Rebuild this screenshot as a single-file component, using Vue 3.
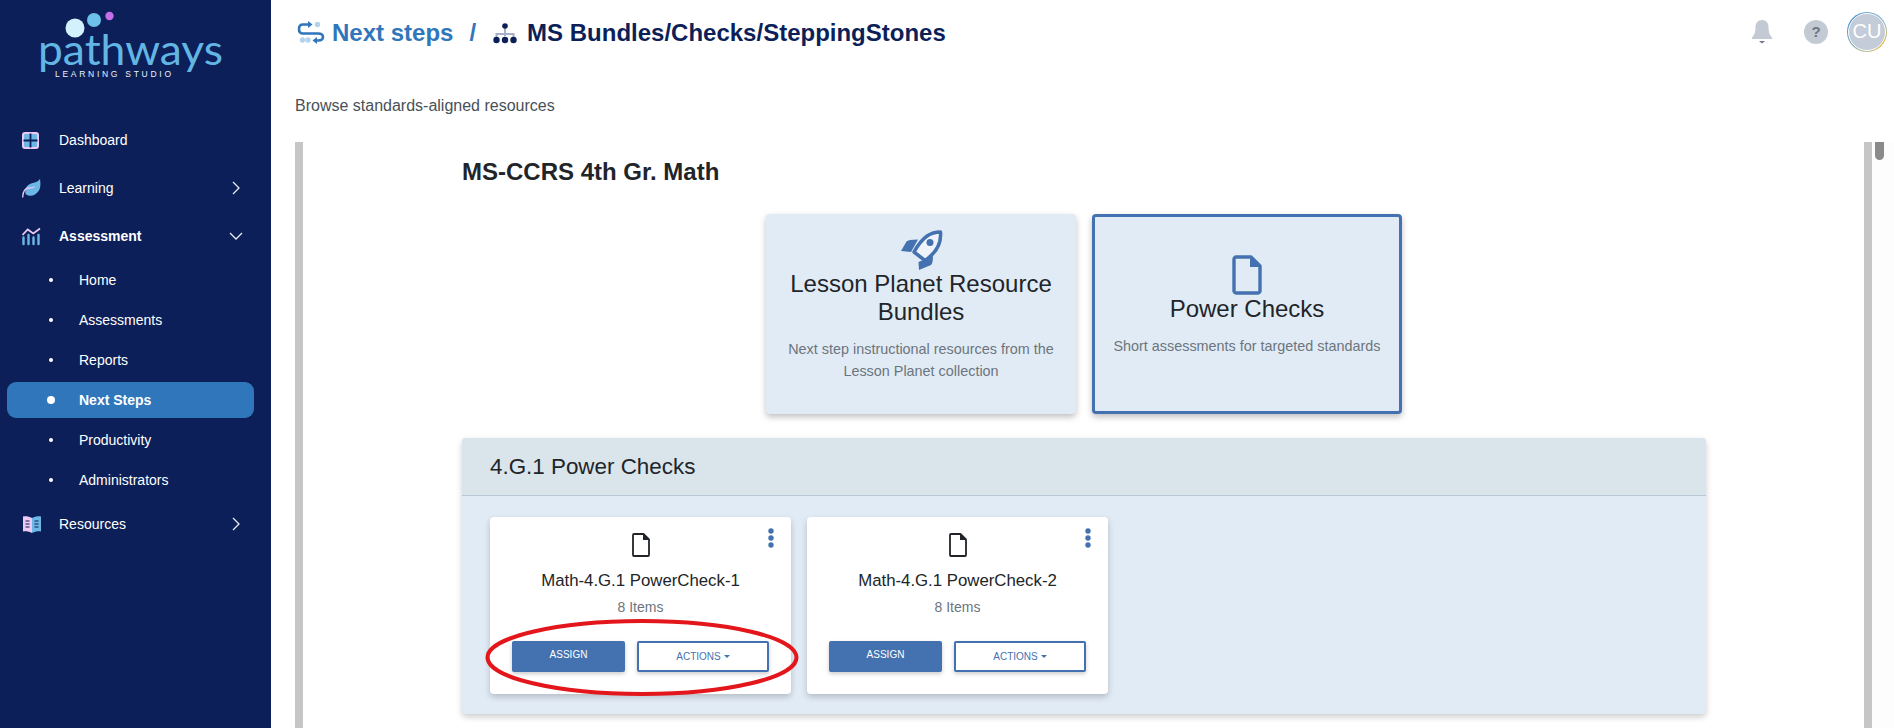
<script setup>
const subItems = [
  { label: 'Home' },
  { label: 'Assessments' },
  { label: 'Reports' },
  { label: 'Next Steps', active: true },
  { label: 'Productivity' },
  { label: 'Administrators' },
]

const checks = [
  { title: 'Math-4.G.1 PowerCheck-1', count: '8 Items' },
  { title: 'Math-4.G.1 PowerCheck-2', count: '8 Items' },
]
</script>

<template>
  <div class="app">
    <aside class="sidebar">
      <svg class="logo" width="271" height="96" viewBox="0 0 271 96">
        <circle cx="75" cy="28" r="9.500" fill="#d3f0fd" />
        <circle cx="94" cy="20" r="7" fill="#6cc0e9" />
        <circle cx="109.500" cy="16" r="4.200" fill="#c46ee9" />
        <text x="38" y="65" class="logo-word" textLength="185" lengthAdjust="spacingAndGlyphs">pathways</text>
        <text x="55" y="76.500" class="logo-sub" textLength="116">LEARNING STUDIO</text>
      </svg>

      <nav class="nav">
        <a class="nav-item">
          <svg class="nav-icon" viewBox="0 0 20 20">
            <rect x="1" y="3" width="15" height="15" rx="2" fill="#6cb7e6" stroke="#ecc9f3" stroke-width="2" />
            <path d="M8.500 3.500V17.500M1.500 10.500H15.500" stroke="#0d1f58" stroke-width="1.800" />
          </svg>
          <span>Dashboard</span>
        </a>
        <a class="nav-item">
          <svg class="nav-icon" viewBox="0 0 20 20">
            <path d="M18 1C19 8 18.500 13 13 16.500C9.500 18.500 6 18 3.500 16C2.500 10.500 5 7 9 5.500C13 4.500 16 4 18 1Z" fill="#6cb7e6" />
            <path d="M0.700 19C1 14 3 10 7 10C9 10 10.500 10 12 9" fill="none" stroke="#ecc9f3" stroke-width="1.300" stroke-linecap="round" />
          </svg>
          <span>Learning</span>
          <svg class="chev" viewBox="0 0 10 14"><path d="M2 1L8 7L2 13" /></svg>
        </a>
        <a class="nav-item strong">
          <svg class="nav-icon" viewBox="0 0 20 20">
            <path d="M0.500 9L5.700 3.500L11.300 7.500L18 2.500" fill="none" stroke="#ecc9f3" stroke-width="1.800" />
            <path d="M1.500 11.500V18M6.500 9V18M11.500 11.500V18M16.500 9V18" fill="none" stroke="#6cb7e6" stroke-width="2.400" stroke-linecap="round" />
          </svg>
          <span>Assessment</span>
          <svg class="chev down" viewBox="0 0 14 10"><path d="M1 2L7 8L13 2" /></svg>
        </a>
        <ul class="sub-list">
          <li v-for="item in subItems" :key="item.label" class="sub-item" :class="{ active: item.active }">
            <i class="bullet"></i>
            <span>{{ item.label }}</span>
          </li>
        </ul>
        <a class="nav-item">
          <svg class="nav-icon" viewBox="0 0 20 20">
            <path d="M1 2.500C4 2 7 2.500 10 4V19C7 17.500 4 17 1 17.500Z" fill="#ecc9f3" />
            <path d="M19 2.500C16 2 13 2.500 10 4V19C13 17.500 16 17 19 17.500Z" fill="#6cb7e6" />
            <path d="M3.500 7H7.500M3.500 10H7.500M3.500 13H7.500M12.500 7H16.500M12.500 10H16.500M12.500 13H16.500" stroke="#0d1f58" stroke-width="1.200" />
          </svg>
          <span>Resources</span>
          <svg class="chev" viewBox="0 0 10 14"><path d="M2 1L8 7L2 13" /></svg>
        </a>
      </nav>
    </aside>

    <div class="main">
      <header class="topbar">
        <svg class="crumb-icon steps" width="28" height="24" viewBox="7 6 28 24">
          <path d="M19 9.500H13Q9 9.500 9 14Q9 18.500 13 18.500H28Q33 18.500 33 22Q33 25.500 28 25.500H26" fill="none" stroke="#3076ba" stroke-width="2.600" />
          <path d="M18 6L22.500 9.500L18 13Z" fill="#3076ba" />
          <path d="M27 22L22.500 25.500L27 29Z" fill="#3076ba" />
          <circle cx="27.500" cy="9.500" r="2.700" fill="#b4d2ea" />
          <circle cx="12.500" cy="25" r="2.700" fill="#b4d2ea" />
          <circle cx="18" cy="25" r="2.700" fill="#b4d2ea" />
        </svg>
        <span class="crumb-link">Next steps</span>
        <span class="crumb-sep">/</span>
        <svg class="crumb-icon tree" width="24" height="24" viewBox="0 0 24 24">
          <path d="M12 6V15M3.500 18V13H20.500V18" fill="none" stroke="#a9afc4" stroke-width="2" />
          <circle cx="12" cy="5" r="2.800" fill="#0d1f58" />
          <circle cx="3.500" cy="19" r="3.200" fill="#0d1f58" />
          <circle cx="12" cy="19" r="3.200" fill="#0d1f58" />
          <circle cx="20.500" cy="19" r="3.200" fill="#0d1f58" />
        </svg>
        <span class="crumb-current">MS Bundles/Checks/SteppingStones</span>

        <div class="top-actions">
          <svg width="22" height="26" viewBox="0 0 22 26">
            <path d="M11 1C7 1 4.500 4 4.500 8C4.500 13 3.500 16 1 18.500C0.500 19.500 1 20 2 20H20C21 20 21.500 19.500 21 18.500C18.500 16 17.500 13 17.500 8C17.500 4 15 1 11 1Z" fill="#c3cad3" />
            <path d="M8 22H14L11 24.500Z" fill="#6b7688" />
          </svg>
          <div class="help">?</div>
          <div class="avatar"><span>CU</span></div>
        </div>
      </header>

      <p class="intro">Browse standards-aligned resources</p>

      <div class="frame">
        <div class="panel">
          <h2 class="panel-title">MS-CCRS 4th Gr. Math</h2>

          <div class="choices">
            <div class="choice">
              <svg width="60" height="42" viewBox="0 5 60 42" class="choice-icon">
                <path d="M49.500 9C40 9 32 13 23 29L34 37.500C45 30 50.500 20.500 49.500 9Z" fill="#edf3f9" stroke="#4472b0" stroke-width="3.500" stroke-linejoin="round" />
                <circle cx="39" cy="19.500" r="3.500" fill="#4472b0" />
                <path d="M10 28L15.500 18.500Q17 16.500 27 16.500L20 29Z" fill="#4472b0" />
                <path d="M28 47L40 42Q42 40 42 33L27.500 39Z" fill="#4472b0" />
              </svg>
              <h3>Lesson Planet Resource Bundles</h3>
              <p>Next step instructional resources from the Lesson Planet collection</p>
            </div>
            <div class="choice selected">
              <svg width="30" height="40" viewBox="0 0 30 40" class="choice-icon">
                <path d="M4 2H19L28 11V36C28 37 27 38 26 38H4C3 38 2 37 2 36V4C2 3 3 2 4 2Z" fill="none" stroke="#4472b0" stroke-width="3.400" stroke-linejoin="round" />
                <path d="M18 2V12H28Z" fill="#4472b0" />
              </svg>
              <h3>Power Checks</h3>
              <p>Short assessments for targeted standards</p>
            </div>
          </div>

          <section class="group">
            <h3 class="group-head">4.G.1 Power Checks</h3>
            <div class="group-body">
              <article v-for="(check, i) in checks" :key="check.title" class="check">
                <svg class="kebab" width="6" height="20" viewBox="0 0 6 20">
                  <circle cx="3" cy="3" r="2.700" />
                  <circle cx="3" cy="10" r="2.700" />
                  <circle cx="3" cy="17" r="2.700" />
                </svg>
                <svg class="check-doc" width="18" height="24" viewBox="0 0 18 24">
                  <path d="M2 1H11.500L17 6.500V22C17 22.500 16.500 23 16 23H2C1.500 23 1 22.500 1 22V2C1 1.500 1.500 1 2 1Z" fill="none" stroke="#212529" stroke-width="1.800" stroke-linejoin="round" />
                  <path d="M11 1V7H17Z" fill="#212529" />
                </svg>
                <div class="check-title">{{ check.title }}</div>
                <div class="check-count">{{ check.count }}</div>
                <div class="check-actions">
                  <button type="button" class="btn-assign">ASSIGN</button>
                  <button type="button" class="btn-actions">ACTIONS<i class="caret"></i></button>
                </div>
                <svg v-if="i === 0" class="highlight" width="320" height="80" viewBox="0 0 320 80">
                  <ellipse cx="157" cy="38.500" rx="154.500" ry="36.500" fill="none" stroke="#e3161b" stroke-width="4" />
                </svg>
              </article>
            </div>
          </section>
        </div>
        <div class="scrolltrack"><div class="thumb"></div></div>
      </div>
    </div>
  </div>
</template>

<style>
html,
body {
  margin: 0;
  overflow: hidden;
  background: #fff;
}
</style>

<style scoped>
.app {
  display: flex;
  width: 1894px;
  height: 728px;
  overflow: hidden;
  font-family: "Liberation Sans", Arial, sans-serif;
  color: #212529;
}

.sidebar {
  flex: 0 0 271px;
  height: 728px;
  background: #0d1f58;
  color: #fff;
  box-sizing: border-box;
}

.logo {
  display: block;
}

.logo-word {
  font-family: "Lato", "Open Sans", sans-serif;
  font-weight: 400;
  font-size: 42px;
  fill: #62b6e4;
}

.logo-sub {
  font-family: "Liberation Sans", sans-serif;
  font-size: 8.500px;
  fill: #e6f3fb;
}

.nav {
  margin-top: 20px;
}

.nav-item {
  display: flex;
  align-items: center;
  height: 48px;
  padding-left: 22px;
  font-size: 14px;
  position: relative;
}

.nav-item.strong {
  font-weight: 700;
}

.nav-icon {
  width: 20px;
  height: 20px;
  margin-right: 17px;
}

.chev {
  position: absolute;
  left: 231px;
  width: 10px;
  height: 14px;
  fill: none;
  stroke: #e8edf5;
  stroke-width: 1.300;
}

.chev.down {
  left: 229px;
  width: 14px;
  height: 10px;
}

.sub-list {
  list-style: none;
  margin: 0 0 -2px;
  padding: 0;
}

.sub-item {
  display: flex;
  align-items: center;
  height: 36px;
  margin: 0 17px 4px 7px;
  padding-left: 44px;
  border-radius: 9px;
  font-size: 14px;
  position: relative;
}

.sub-item:first-child {
  margin-top: 2px;
}

.bullet {
  flex: none;
  width: 4px;
  height: 4px;
  margin-left: -2px;
  margin-right: 26px;
  border-radius: 50%;
  background: #fff;
}

.sub-item.active {
  background: #3076ba;
  font-weight: 700;
}

.sub-item.active .bullet {
  width: 8px;
  height: 8px;
  margin-left: -4px;
  margin-right: 24px;
}

.main {
  flex: 1;
  min-width: 0;
  display: flex;
  flex-direction: column;
}

.topbar {
  display: flex;
  align-items: center;
  height: 64px;
  padding: 2px 7px 0 26px;
  box-sizing: border-box;
  font-size: 24px;
  font-weight: 700;
}

.crumb-icon {
  flex: none;
  margin-right: 10px;
}

.crumb-icon.steps {
  margin-right: 7px;
}

.crumb-link {
  color: #3076ba;
}

.crumb-sep {
  color: #3076ba;
  margin: 0 17px 0 16px;
}

.crumb-current {
  color: #0d1f58;
}

.top-actions {
  margin-left: auto;
  margin-top: -2px;
  display: flex;
  align-items: center;
  gap: 22px;
}

.help {
  width: 24px;
  height: 24px;
  margin-left: 9px;
  border-radius: 50%;
  background: #c3cad3;
  color: #6b7688;
  font-size: 15px;
  line-height: 24px;
  text-align: center;
}

.avatar {
  width: 40px;
  height: 40px;
  margin-left: -3px;
  box-sizing: border-box;
  border-radius: 50%;
  padding: 1px;
  background: conic-gradient(from 300deg, #3f8fd0, #8fb8c8 120deg, #e3b63e 180deg, #c0c59a 240deg, #3f8fd0);
}

.avatar span {
  display: block;
  height: 100%;
  border-radius: 50%;
  border: 1.500px solid #fff;
  box-sizing: border-box;
  background: #c3ccd8;
  color: #fff;
  font-size: 20px;
  font-weight: 400;
  line-height: 35px;
  text-align: center;
}

.intro {
  margin: 33px 0 0;
  padding-left: 24px;
  height: 45px;
  font-size: 16px;
  line-height: 18px;
  color: #495057;
}

.frame {
  flex: 1;
  min-height: 0;
  display: flex;
  margin-left: 24px;
}

.panel {
  width: 1577px;
  box-sizing: border-box;
  border-left: 8px solid #c6c6c6;
  border-right: 8px solid #c6c6c6;
  padding: 16px 158px 0 159px;
  overflow: hidden;
}

.panel-title {
  margin: 0;
  font-size: 24px;
  line-height: 28px;
  font-weight: 700;
  color: #212529;
}

.choices {
  display: flex;
  justify-content: center;
  gap: 16px;
  margin-top: 28px;
}

.choice {
  width: 310px;
  height: 200px;
  box-sizing: border-box;
  padding: 14px 20px 0;
  display: flex;
  flex-direction: column;
  align-items: center;
  text-align: center;
  background: #e1ebf5;
  border-radius: 4px;
  box-shadow: 0 3px 6px rgba(0, 0, 0, 0.25);
}

.choice.selected {
  padding: 38px 10px 0;
  border: 3px solid #4472b0;
}

.choice-icon {
  flex: none;
}

.choice h3 {
  margin: 0;
  font-size: 24px;
  line-height: 28px;
  font-weight: 400;
}

.choice p {
  margin: 12px 0 0;
  font-size: 14.400px;
  line-height: 22px;
  color: #6c757d;
}

.group {
  margin-top: 24px;
  background: #e1ebf5;
  border-radius: 4px;
  box-shadow: 0 3px 6px rgba(0, 0, 0, 0.2);
}

.group-head {
  margin: 0;
  height: 58px;
  box-sizing: border-box;
  padding-left: 28px;
  background: #dae4eb;
  border-bottom: 1px solid #b9c8d6;
  border-radius: 4px 4px 0 0;
  font-size: 22.400px;
  font-weight: 400;
  line-height: 57px;
}

.group-body {
  display: flex;
  gap: 16px;
  padding: 21px 28px 20px;
}

.check {
  position: relative;
  width: 301px;
  height: 177px;
  box-sizing: border-box;
  padding-top: 16px;
  background: #fff;
  border-radius: 4px;
  box-shadow: 0 3px 6px rgba(0, 0, 0, 0.2);
  text-align: center;
}

.kebab {
  position: absolute;
  top: 11px;
  right: 17px;
  fill: #4472b0;
}

.check-doc {
  display: block;
  margin: 0 auto;
}

.check-title {
  margin-top: 14px;
  font-size: 16.800px;
  line-height: 20px;
}

.check-count {
  margin-top: 7px;
  font-size: 14px;
  line-height: 18px;
  color: #6c757d;
}

.check-actions {
  display: flex;
  justify-content: center;
  gap: 12px;
  margin-top: 25px;
}

.check-actions button {
  height: 31px;
  box-sizing: border-box;
  font-family: inherit;
  font-size: 10px;
  border-radius: 2px;
  box-shadow: 0 2px 4px rgba(0, 0, 0, 0.2);
}

.btn-assign {
  width: 113px;
  padding: 0 0 5px;
  border: 0;
  background: #4472b0;
  color: #fff;
}

.btn-actions {
  width: 132px;
  padding: 0;
  border: 2px solid #4472b0;
  background: #fff;
  color: #4472b0;
}

.caret {
  display: inline-block;
  margin-left: 3px;
  vertical-align: 2px;
  border-top: 3px solid #4472b0;
  border-left: 3px solid transparent;
  border-right: 3px solid transparent;
}

.highlight {
  position: absolute;
  left: -5px;
  top: 102px;
  pointer-events: none;
}

.scrolltrack {
  flex: 1;
  background: #fdfdfd;
  padding-left: 3px;
}

.thumb {
  width: 9px;
  height: 18px;
  background: #8a8a8a;
  border-radius: 0 0 5px 5px;
}
</style>
